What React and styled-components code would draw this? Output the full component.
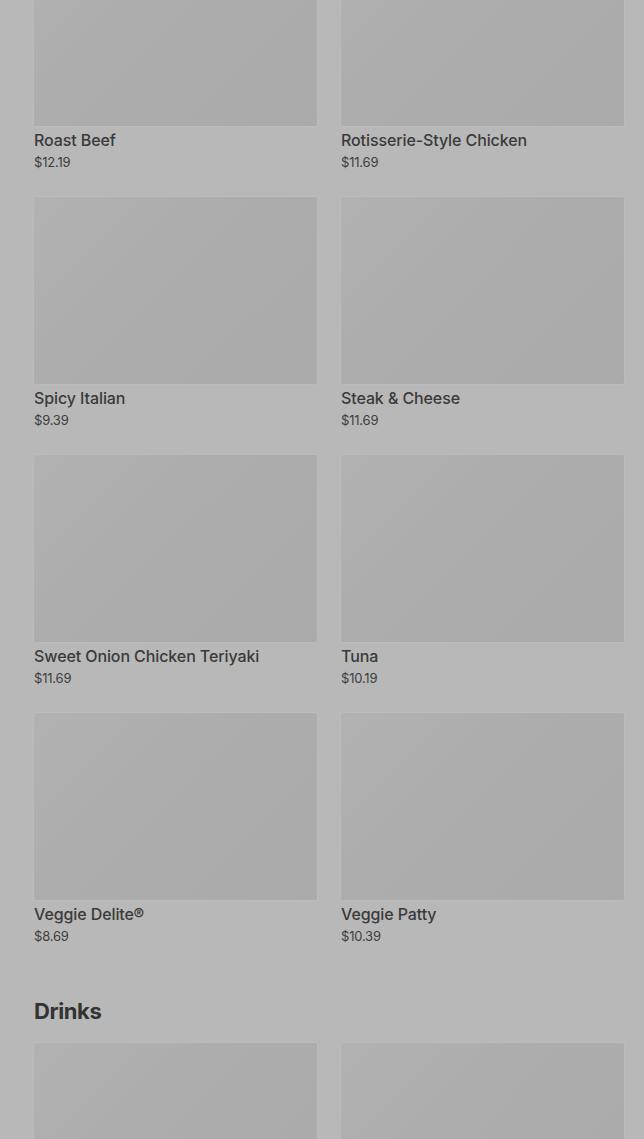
import React from "react";
import styled, { createGlobalStyle } from "styled-components";

const Global = createGlobalStyle`
  html, body { margin: 0; padding: 0; background: #b8b8b8; overflow: hidden; }
  body { font-family: Inter, "Noto Sans", "Liberation Sans", sans-serif; color: #3a3a3a; }
`;

const Page = styled.main`
  height: 1139px;
  overflow: hidden;
  background: #b8b8b8;
`;

const Scrolled = styled.div`
  margin-top: -61px;
  padding: 0 20px 0 34px;
  display: flex;
  flex-direction: column;
  gap: 50px;
`;

const Section = styled.section`
  display: flex;
  flex-direction: column;
  gap: 16px;
`;

const Heading = styled.h2`
  margin: 0;
  font-size: 22px;
  line-height: 32px;
  font-weight: 700;
  letter-spacing: -0.4px;
  color: #333;
`;

const Grid = styled.div`
  display: grid;
  grid-template-columns: 283px 283px;
  column-gap: 24px;
  row-gap: 26px;
`;

const Card = styled.article`
  display: flex;
  flex-direction: column;
`;

const Thumb = styled.div`
  height: 187px;
  border-radius: 2px;
  background: linear-gradient(135deg, #b2b2b2 0%, #adadad 35%, #aaaaaa 100%);
  box-shadow: 0 0 0 1px rgba(255, 255, 255, 0.06);
`;

const Name = styled.h3`
  margin: 4px 0 0;
  font-size: 16px;
  line-height: 20px;
  font-weight: 500;
  letter-spacing: -0.1px;
  color: #3a3a3a;
`;

const Price = styled.span`
  margin-top: 3px;
  font-size: 13px;
  line-height: 18px;
  color: #3d3d3d;
  letter-spacing: -0.2px;
`;

const sandwiches = [
  ["Roast Beef", "$12.19"],
  ["Rotisserie-Style Chicken", "$11.69"],
  ["Spicy Italian", "$9.39"],
  ["Steak & Cheese", "$11.69"],
  ["Sweet Onion Chicken Teriyaki", "$11.69"],
  ["Tuna", "$10.19"],
  ["Veggie Delite®", "$8.69"],
  ["Veggie Patty", "$10.39"],
];

const drinks = ["drink-1", "drink-2"];

function Item({ name, price }) {
  return (
    <Card>
      <Thumb />
      {name && <Name>{name}</Name>}
      {price && <Price>{price}</Price>}
    </Card>
  );
}

export default function App() {
  return (
    <Page>
      <Global />
      <Scrolled>
        <Section>
          <Grid>
            {sandwiches.map(([n, p]) => (
              <Item key={n} name={n} price={p} />
            ))}
          </Grid>
        </Section>
        <Section>
          <Heading>Drinks</Heading>
          <Grid>
            {drinks.map((k) => (
              <Item key={k} />
            ))}
          </Grid>
        </Section>
      </Scrolled>
    </Page>
  );
}
